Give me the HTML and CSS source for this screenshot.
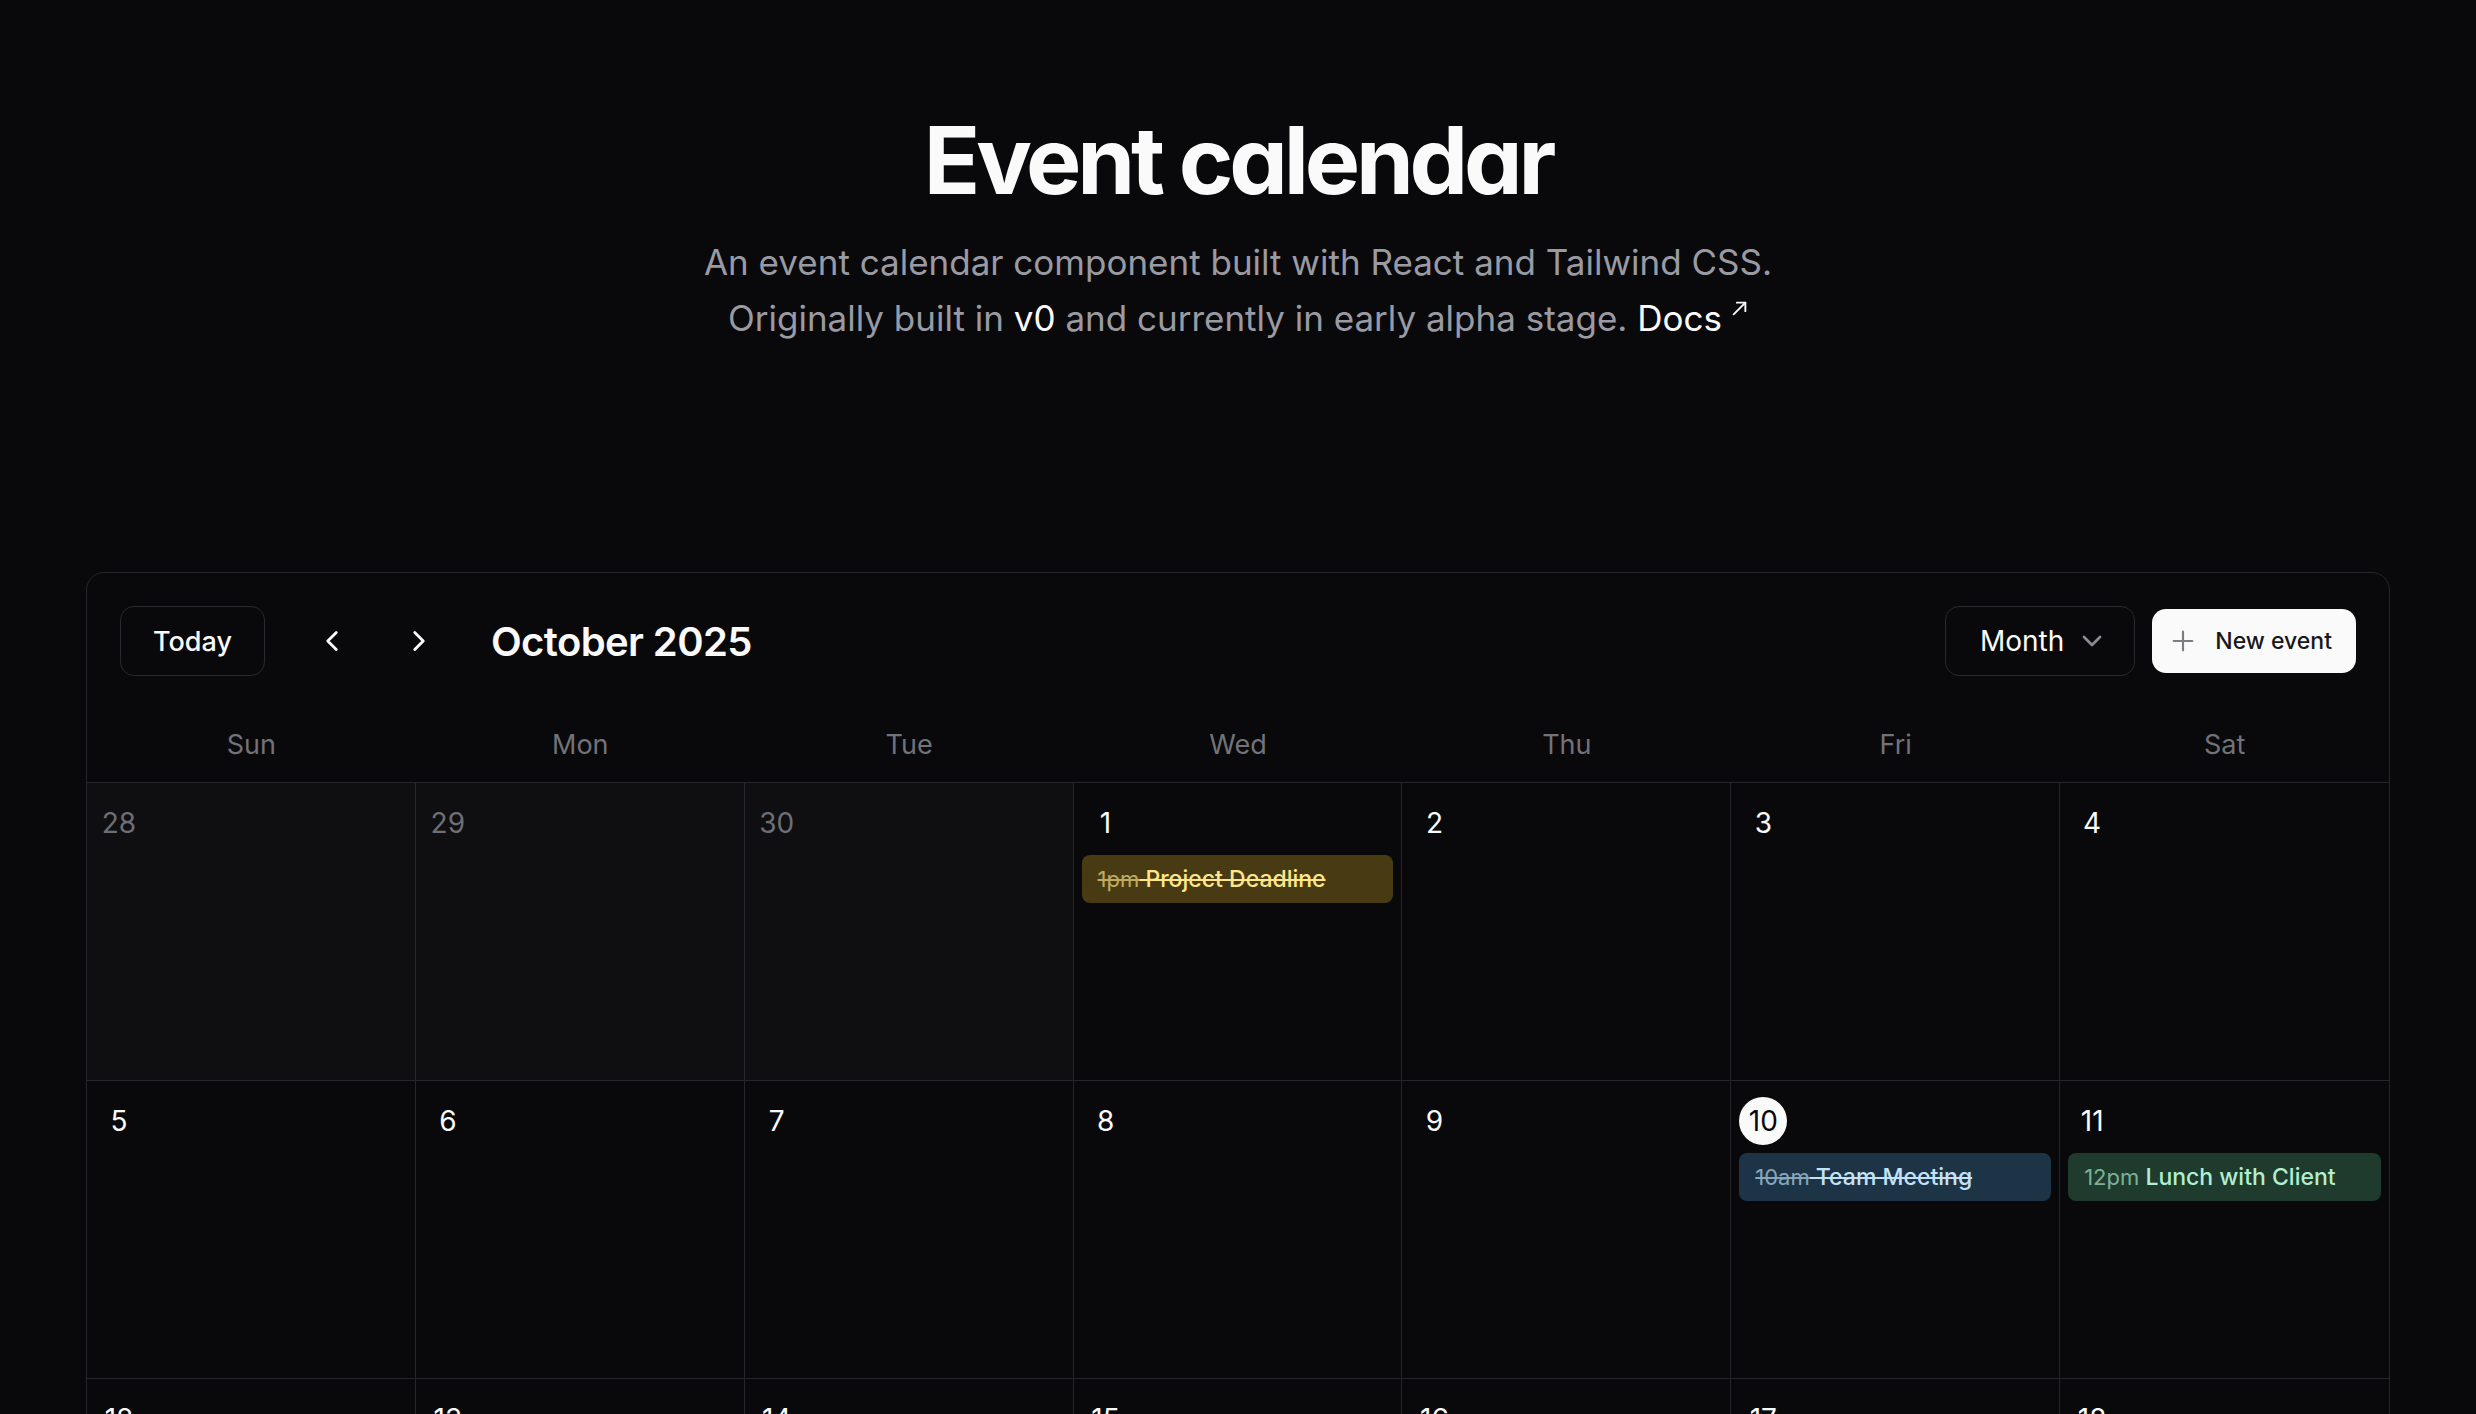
FILE: index.html
```html
<!DOCTYPE html>
<html lang="en">
<head>
<meta charset="utf-8">
<title>Event calendar</title>
<link rel="stylesheet" href="styles.css">
</head>
<body>
<main class="page">
  <section class="hero">
    <h1 class="hero-title">Event calendar</h1>
    <p class="hero-sub">An event calendar component built with React and Tailwind CSS.<br>Originally built in <span class="hl">v0</span> and currently in early alpha stage. <a class="docs" href="#">Docs<svg class="docs-arrow" width="17" height="17" viewBox="0 0 16 16" fill="none" stroke="currentColor" stroke-width="1.8" stroke-linecap="round" stroke-linejoin="round"><path d="M2.5 13.5 13.5 2.5"/><path d="M5.5 2.5h8v8"/></svg></a></p>
  </section>

  <section class="card">
    <div class="toolbar">
      <div class="toolbar-left">
        <button class="btn btn-outline btn-today">Today</button>
        <div class="nav">
          <button class="btn-icon" aria-label="Previous"><svg width="34" height="34" viewBox="0 0 24 24" fill="none" stroke="currentColor" stroke-width="2" stroke-linecap="round" stroke-linejoin="round"><path d="m15 18-6-6 6-6"/></svg></button>
          <button class="btn-icon" aria-label="Next"><svg width="34" height="34" viewBox="0 0 24 24" fill="none" stroke="currentColor" stroke-width="2" stroke-linecap="round" stroke-linejoin="round"><path d="m9 18 6-6-6-6"/></svg></button>
        </div>
        <h2 class="month-title">October 2025</h2>
      </div>
      <div class="toolbar-right">
        <button class="btn btn-outline btn-view">Month<svg class="icon-muted" width="32" height="32" viewBox="0 0 24 24" fill="none" stroke="currentColor" stroke-width="2" stroke-linecap="round" stroke-linejoin="round"><path d="m6 9 6 6 6-6"/></svg></button>
        <button class="btn btn-primary"><svg class="icon-plus" width="32" height="32" viewBox="0 0 24 24" fill="none" stroke="currentColor" stroke-width="1.6" stroke-linecap="round" stroke-linejoin="round"><path d="M5 12h14"/><path d="M12 5v14"/></svg>New event</button>
      </div>
    </div>

    <div class="weekdays">
      <div class="weekday">Sun</div>
      <div class="weekday">Mon</div>
      <div class="weekday">Tue</div>
      <div class="weekday">Wed</div>
      <div class="weekday">Thu</div>
      <div class="weekday">Fri</div>
      <div class="weekday">Sat</div>
    </div>

    <div class="grid">
      <div class="cell outside"><span class="day">28</span></div>
      <div class="cell outside"><span class="day">29</span></div>
      <div class="cell outside"><span class="day">30</span></div>
      <div class="cell"><span class="day">1</span><div class="event amber done"><span class="time">1pm</span> Project Deadline</div></div>
      <div class="cell"><span class="day">2</span></div>
      <div class="cell"><span class="day">3</span></div>
      <div class="cell"><span class="day">4</span></div>

      <div class="cell"><span class="day">5</span></div>
      <div class="cell"><span class="day">6</span></div>
      <div class="cell"><span class="day">7</span></div>
      <div class="cell"><span class="day">8</span></div>
      <div class="cell"><span class="day">9</span></div>
      <div class="cell"><span class="day today">10</span><div class="event sky done"><span class="time">10am</span> Team Meeting</div></div>
      <div class="cell"><span class="day">11</span><div class="event emerald"><span class="time">12pm</span> Lunch with Client</div></div>

      <div class="cell"><span class="day">12</span></div>
      <div class="cell"><span class="day">13</span></div>
      <div class="cell"><span class="day">14</span></div>
      <div class="cell"><span class="day">15</span></div>
      <div class="cell"><span class="day">16</span></div>
      <div class="cell"><span class="day">17</span></div>
      <div class="cell"><span class="day">18</span></div>

      <div class="cell"><span class="day">19</span></div>
      <div class="cell"><span class="day">20</span></div>
      <div class="cell"><span class="day">21</span></div>
      <div class="cell"><span class="day">22</span></div>
      <div class="cell"><span class="day">23</span></div>
      <div class="cell"><span class="day">24</span></div>
      <div class="cell"><span class="day">25</span></div>

      <div class="cell"><span class="day">26</span></div>
      <div class="cell"><span class="day">27</span></div>
      <div class="cell"><span class="day">28</span></div>
      <div class="cell"><span class="day">29</span></div>
      <div class="cell"><span class="day">30</span></div>
      <div class="cell"><span class="day">31</span></div>
      <div class="cell outside"><span class="day">1</span></div>
    </div>
  </section>
</main>
</body>
</html>
```

FILE: styles.css
```css
* { box-sizing: border-box; }

html, body {
  margin: 0;
  background: #09090b;
}

body {
  font-family: Inter, "Noto Sans", "Liberation Sans", sans-serif;
  color: #fafafa;
}

.page {
  padding: 0 86px;
}

/* ---------- hero ---------- */
.hero {
  text-align: center;
  padding-top: 112px;
}

.hero-title {
  margin: 0;
  font-size: 93px;
  line-height: 96px;
  font-weight: 700;
  letter-spacing: -0.045em;
  font-feature-settings: "cv11" 1;
  color: #fafafa;
}

.hero-sub {
  margin: 26px 0 0;
  font-size: 35px;
  line-height: 56px;
  color: #9a9aa3;
}

.hero-sub .hl { color: #fafafa; }

.docs {
  color: #fafafa;
  text-decoration: none;
}

.docs-arrow {
  display: inline-block;
  vertical-align: top;
  margin: 10px 0 0 9px;
}

/* ---------- card ---------- */
.card {
  margin-top: 226px;
  border: 1px solid #26262a;
  border-radius: 18px;
  overflow: hidden;
}

.toolbar {
  display: flex;
  align-items: center;
  justify-content: space-between;
  padding: 33px 33px 31px;
}

.toolbar-left,
.toolbar-right {
  display: flex;
  align-items: center;
}

.toolbar-left { gap: 31px; }
.toolbar-right { gap: 17px; }

.nav {
  display: flex;
  align-items: center;
  gap: 15px;
}

.btn {
  display: inline-flex;
  align-items: center;
  justify-content: center;
  font-family: inherit;
  font-weight: 500;
  cursor: pointer;
  border-radius: 14px;
}

.btn-outline {
  height: 70px;
  background: transparent;
  color: #fafafa;
  border: 1.5px solid #2a2a2e;
  font-size: 27px;
}

.btn-today {
  padding: 0 32px;
}

.btn-view {
  padding: 0 26px 0 34px;
  gap: 12px;
  font-weight: 400;
  font-size: 28px;
}

.icon-muted { color: #8a8a92; }

.btn-primary {
  height: 64px;
  background: #fafafa;
  color: #18181b;
  border: none;
  font-size: 23px;
  padding: 0 24px 0 15px;
  gap: 16px;
}

.icon-plus { color: #7c7c84; }

.btn-icon {
  width: 72px;
  height: 70px;
  display: inline-flex;
  align-items: center;
  justify-content: center;
  background: transparent;
  border: none;
  color: #fafafa;
  padding: 0;
  cursor: pointer;
}

.month-title {
  margin: 0 0 0 5px;
  font-size: 40px;
  font-weight: 600;
  letter-spacing: -0.015em;
  color: #fafafa;
}

/* ---------- weekday header ---------- */
.weekdays {
  display: grid;
  grid-template-columns: repeat(7, 1fr);
  height: 76px;
  border-bottom: 1px solid #26262a;
}

.weekday {
  display: flex;
  align-items: center;
  justify-content: center;
  font-size: 27px;
  color: #727279;
}

/* ---------- month grid ---------- */
.grid {
  display: grid;
  grid-template-columns: repeat(7, 1fr);
  grid-auto-rows: 298px;
}

.cell {
  padding: 16px 8px;
  border-right: 1px solid #26262a;
  border-bottom: 1px solid #26262a;
  display: flex;
  flex-direction: column;
  align-items: flex-start;
  min-width: 0;
}

.cell:nth-child(7n) { border-right: none; }
.cell:nth-last-child(-n+7) { border-bottom: none; }

.cell.outside { background: #0f0f12; }

.day {
  display: inline-flex;
  align-items: center;
  justify-content: center;
  min-width: 48px;
  height: 48px;
  padding: 0 6px;
  border-radius: 999px;
  font-size: 28px;
  color: #fafafa;
}

.outside .day { color: #6e6e75; }

.day.today {
  background: #fafafa;
  color: #09090b;
}

.event {
  margin-top: 8px;
  width: 100%;
  height: 48px;
  border-radius: 8px;
  padding: 0 16px;
  display: flex;
  align-items: center;
  white-space: pre;
  overflow: hidden;
  font-size: 23px;
  font-weight: 500;
}

.event .time {
  font-size: 22px;
  font-weight: 400;
  opacity: 0.65;
}

.event.done { text-decoration: line-through; }

.event.amber {
  background: #483a13;
  color: #fde68a;
}

.event.sky {
  background: #1d3346;
  color: #c3e2f7;
}

.event.emerald {
  background: #1e3b2d;
  color: #b0efcf;
}
```
